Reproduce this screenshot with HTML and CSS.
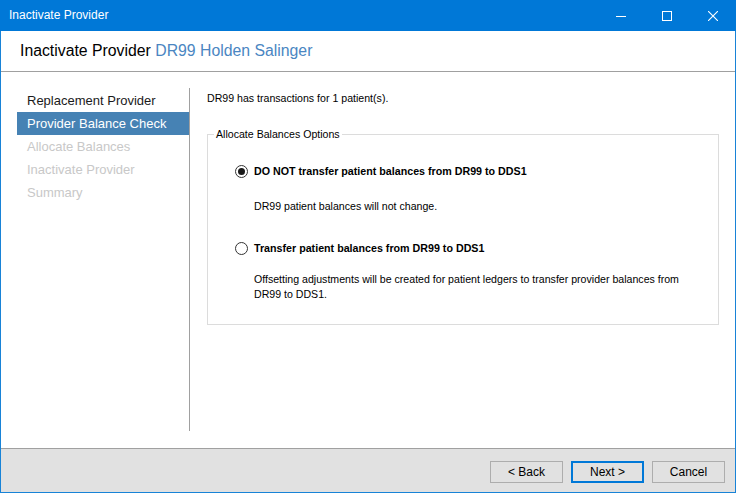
FILE: index.html
```html
<!DOCTYPE html>
<html>
<head>
<meta charset="utf-8">
<link rel="stylesheet" href="styles.css">
</head>
<body>
<div class="window">
  <div class="titlebar">
    <span class="title">Inactivate Provider</span>
    <div class="controls">
      <span class="ctl"><svg width="10" height="10" viewBox="0 0 10 10"><path d="M0 5.5H10" stroke="#fff" stroke-width="1"/></svg></span>
      <span class="ctl"><svg width="10" height="10" viewBox="0 0 10 10"><rect x="0.5" y="0.5" width="9" height="9" fill="none" stroke="#fff" stroke-width="1"/></svg></span>
      <span class="ctl"><svg width="10" height="10" viewBox="0 0 10 10"><path d="M0 0L10 10M10 0L0 10" stroke="#fff" stroke-width="1.1"/></svg></span>
    </div>
  </div>
  <div class="header">Inactivate Provider <span class="sub">DR99 Holden Salinger</span></div>
  <div class="content">
    <div class="nav">
      <div class="item">Replacement Provider</div>
      <div class="item selected">Provider Balance Check</div>
      <div class="item disabled">Allocate Balances</div>
      <div class="item disabled">Inactivate Provider</div>
      <div class="item disabled">Summary</div>
    </div>
    <div class="pane">
      <div class="intro">DR99 has transactions for 1 patient(s).</div>
      <fieldset class="group">
        <legend>Allocate Balances Options</legend>
        <div class="group-body">
          <div class="option">
            <span class="radio checked"></span>
            <span class="label">DO NOT transfer patient balances from DR99 to DDS1</span>
          </div>
          <div class="desc first">DR99 patient balances will not change.</div>
          <div class="option second">
            <span class="radio"></span>
            <span class="label">Transfer patient balances from DR99 to DDS1</span>
          </div>
          <div class="desc multi">Offsetting adjustments will be created for patient ledgers to transfer provider balances from DR99 to DDS1.</div>
        </div>
      </fieldset>
    </div>
  </div>
  <div class="footer">
    <button class="btn">&lt; Back</button>
    <button class="btn primary">Next &gt;</button>
    <button class="btn">Cancel</button>
  </div>
</div>
</body>
</html>
```
FILE: styles.css
```css
* { box-sizing: border-box; }
html, body { margin: 0; padding: 0; background: #fff; }
body { font-family: "Liberation Sans", Arial, sans-serif; color: #000; }

.window {
  width: 736px;
  height: 493px;
  display: flex;
  flex-direction: column;
  border-left: 1px solid #1883d7;
  border-right: 1px solid #1883d7;
  border-bottom: 1px solid #1883d7;
  background: #fff;
}

.titlebar {
  height: 31px;
  flex: none;
  background: #0078d7;
  margin: 0 -1px;
  display: flex;
  align-items: center;
  justify-content: space-between;
  color: #fff;
}
.title { font-size: 12px; padding-left: 9px; padding-bottom: 1px; }
.controls { display: flex; height: 100%; }
.ctl { width: 46px; height: 100%; display: flex; align-items: center; justify-content: center; }
.ctl svg { display: block; }

.header {
  height: 41px;
  flex: none;
  border-bottom: 1px solid #a0a0a0;
  padding-left: 19px;
  display: flex;
  align-items: center;
  font-size: 15.8px;
  color: #000;
  white-space: pre;
}
.sub { color: #4a86c2; }

.content {
  flex: 1;
  display: flex;
  padding: 16px 0 17px 0;
}
.nav {
  width: 188px;
  flex: none;
  padding: 1px 0 0 16px;
}
.item {
  height: 23px;
  line-height: 23px;
  padding-left: 10px;
  font-size: 13px;
  color: #1a1a1a;
}
.item.selected { background: #4682b4; color: #fff; }
.item.disabled { color: #c8c8c8; }

.pane {
  flex: 1;
  border-left: 1px solid #a0a0a0;
  padding: 4px 16px 0 17px;
  font-size: 10.6px;
}
.intro { line-height: 13px; }

.group {
  margin: 23px 0 0 0;
  padding: 22px 20px 22px 6px;
  border: 1px solid #dcdcdc;
  min-width: 0;
}
.group legend {
  font-size: 10.6px;
  line-height: 13px;
  padding: 0 2px;
  margin-left: 0;
  color: #000;
}
.group-body { padding-left: 21px; }
.option {
  display: flex;
  align-items: center;
  height: 16px;
}
.option.second { margin-top: 27px; }
.radio {
  width: 13px;
  height: 13px;
  border: 1px solid #333;
  border-radius: 50%;
  background: #fff;
  flex: none;
  display: flex;
  align-items: center;
  justify-content: center;
}
.radio.checked::after {
  content: "";
  width: 7px;
  height: 7px;
  border-radius: 50%;
  background: #1a1a1a;
}
.label { font-weight: bold; margin-left: 6px; font-size: 10.7px; }
.desc { margin-left: 19px; color: #000; }
.desc.first { margin-top: 20px; line-height: 14px; }
.desc.multi { margin-top: 16px; line-height: 15px; }

.footer {
  height: 44px;
  flex: none;
  border-top: 1px solid #a0a0a0;
  background: #e1e1e1;
  display: flex;
  justify-content: flex-end;
  align-items: flex-start;
  gap: 8px;
  padding: 12px 10px 0 0;
}
.btn {
  width: 73px;
  height: 22px;
  margin: 0;
  padding: 0;
  border: 1px solid #adadad;
  background: #e1e1e1;
  font-family: "Liberation Sans", Arial, sans-serif;
  font-size: 12px;
  color: #000;
}
.btn.primary { border: 2px solid #0078d7; }
```
